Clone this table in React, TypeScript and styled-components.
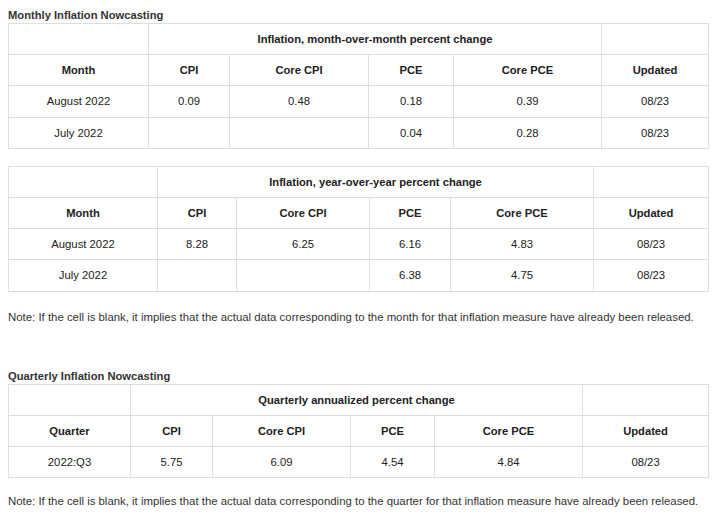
import { createGlobalStyle } from "styled-components";
import styled from "styled-components";

const GlobalStyle = createGlobalStyle`
  body {
    margin: 0;
    background: #fff;
    font-family: "Liberation Sans", Arial, sans-serif;
    color: #333;
  }
`;

const Page = styled.div`
  padding: 7px 8px 0 8px;
  width: 700px;
`;

const Title = styled.h3`
  margin: 0;
  font-size: 11.2px;
  font-weight: 700;
  line-height: 16px;
  color: #333;
`;

const Table = styled.table<{ $gap?: number }>`
  width: 700px;
  border-collapse: collapse;
  table-layout: fixed;
  margin-bottom: ${(p) => p.$gap ?? 0}px;
  font-size: 11.3px;
  color: #222;
`;

const Cell = styled.td`
  height: 30.2px;
  padding: 0 4px;
  border: 1.5px solid #dedede;
  text-align: center;
  vertical-align: middle;
`;

const HeadCell = styled(Cell).attrs({ as: "th" })`
  font-size: 11.2px;
  font-weight: 700;
`;

const Note = styled.p<{ $before: number; $after: number }>`
  margin: ${(p) => p.$before}px 0 ${(p) => p.$after}px;
  font-size: 11.4px;
  line-height: 16px;
  color: #333;
`;

type TableData = {
  title: string;
  first: string;
  widths: number[];
  rows: string[][];
};

const cols = ["CPI", "Core CPI", "PCE", "Core PCE", "Updated"];

function DataTable({ data, gap }: { data: TableData; gap?: number }) {
  return (
    <Table $gap={gap}>
      <colgroup>
        {data.widths.map((w, i) => (
          <col key={i} style={{ width: w }} />
        ))}
      </colgroup>
      <tbody>
        <tr>
          <HeadCell />
          <HeadCell colSpan={4}>{data.title}</HeadCell>
          <HeadCell />
        </tr>
        <tr>
          <HeadCell>{data.first}</HeadCell>
          {cols.map((c) => (
            <HeadCell key={c}>{c}</HeadCell>
          ))}
        </tr>
        {data.rows.map((r, i) => (
          <tr key={i}>
            {r.map((v, j) => (
              <Cell key={j}>{v}</Cell>
            ))}
          </tr>
        ))}
      </tbody>
    </Table>
  );
}

const mom: TableData = {
  title: "Inflation, month-over-month percent change",
  first: "Month",
  widths: [140, 81, 139, 85, 148, 107],
  rows: [
    ["August 2022", "0.09", "0.48", "0.18", "0.39", "08/23"],
    ["July 2022", "", "", "0.04", "0.28", "08/23"],
  ],
};

const yoy: TableData = {
  title: "Inflation, year-over-year percent change",
  first: "Month",
  widths: [149, 79, 133, 81, 143, 115],
  rows: [
    ["August 2022", "8.28", "6.25", "6.16", "4.83", "08/23"],
    ["July 2022", "", "", "6.38", "4.75", "08/23"],
  ],
};

const qtr: TableData = {
  title: "Quarterly annualized percent change",
  first: "Quarter",
  widths: [122, 82, 138, 84, 148, 126],
  rows: [["2022:Q3", "5.75", "6.09", "4.54", "4.84", "08/23"]],
};

export default function App() {
  return (
    <>
      <GlobalStyle />
      <Page>
        <Title>Monthly Inflation Nowcasting</Title>
        <DataTable data={mom} gap={17} />
        <DataTable data={yoy} />
        <Note $before={17} $after={43}>
          Note: If the cell is blank, it implies that the actual data corresponding to the month for that
          inflation measure have already been released.
        </Note>
        <Title>Quarterly Inflation Nowcasting</Title>
        <DataTable data={qtr} />
        <Note $before={15} $after={0}>
          Note: If the cell is blank, it implies that the actual data corresponding to the quarter for that
          inflation measure have already been released.
        </Note>
      </Page>
    </>
  );
}
